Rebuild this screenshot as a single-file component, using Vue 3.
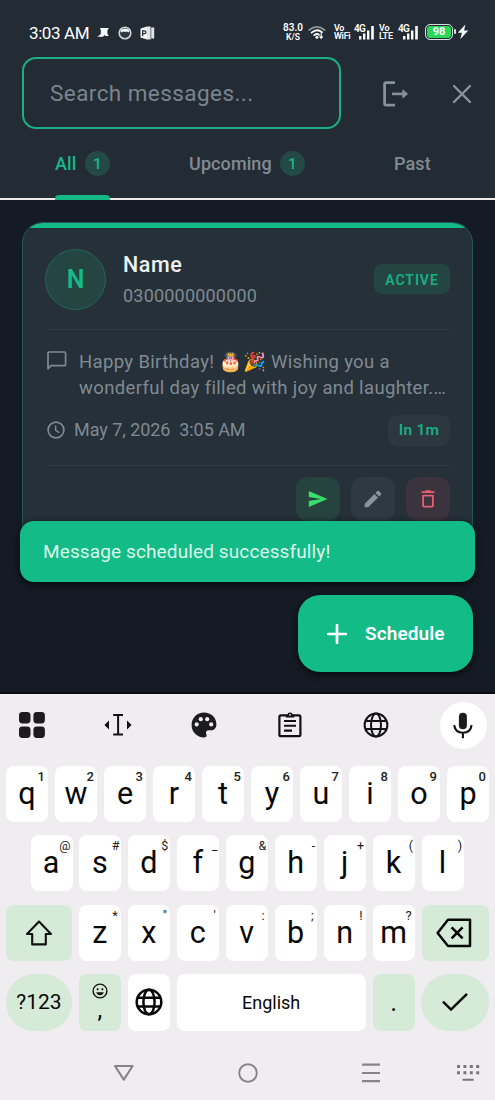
<script setup>
const rowOne = [['q', '1'], ['w', '2'], ['e', '3'], ['r', '4'], ['t', '5'], ['y', '6'], ['u', '7'], ['i', '8'], ['o', '9'], ['p', '0']]
const rowTwo = [['a', '@'], ['s', '#'], ['d', '$'], ['f', '_'], ['g', '&'], ['h', '-'], ['j', '+'], ['k', '('], ['l', ')']]
const rowThree = [['z', '*'], ['x', '"'], ['c', "'"], ['v', ':'], ['b', ';'], ['n', '!'], ['m', '?']]
</script>

<template>
  <div class="phone">
    <header class="header">
      <div class="status">
        <span class="clock">3:03 AM</span>
        <svg class="s-bird" width="13" height="12" viewBox="0 0 13 12"><path d="M3 1H11.8L10.4 3.4V6.4L11.8 9H8.4L7.6 8L6 9.8H.4L3.8 7V3Z" fill="#f4f6f8" /></svg>
        <svg class="s-face" width="14" height="14" viewBox="0 0 14 14"><circle cx="7" cy="7" r="5.8" fill="#2f3942" stroke="#cfd4d8" stroke-width="1.6" /><path d="M2.2 4.6Q7 .6 11.8 4.6L10.5 6.4L9 5.4L7 6L5 5.4L3.4 6.4Z" fill="#f4f6f8" /></svg>
        <svg class="s-office" width="15" height="14" viewBox="0 0 15 14"><path d="M.5 2.4L7 .6V13.4L.5 11.6Z" fill="#f4f6f8" /><path d="M7 .6H10.6V13.4H7ZM11.2 1.6H14.2V12.4H11.2Z" fill="#e3e6e9" /><path d="M2.6 10V4.8H4.6Q6 5 6 6.2T4.6 7.7H2.8" fill="none" stroke="#232c35" stroke-width="1.2" /></svg>
        <span class="stack speed"><b>83.0</b><i>K/S</i></span>
        <svg class="s-wifi" width="18" height="15" viewBox="0 0 18 15"><g fill="none" stroke-linecap="round"><path d="M1.2 5Q9-1.4 16.6 5" stroke="#8d959b" stroke-width="1.7" /><path d="M3.6 7.6Q9 3.2 14 7.2M6.2 10.1Q9 8 11 9.8" stroke="#fff" stroke-width="1.8" /></g><circle cx="8.9" cy="12.3" r="1.5" fill="#fff" /><path d="M13.2 8.2V13M11.6 11.4L13.2 13.2L14.6 11.4" fill="none" stroke="#fff" stroke-width="1.2" /></svg>
        <span class="stack wifi"><b>Vo</b><b>WiFi</b></span>
        <span class="signal"><b>4G</b><svg width="21" height="16" viewBox="0 0 21 16"><path d="M5 12h2.4v3.5H5ZM9 9.5h2.4v6H9ZM13 6.5h2.4v9H13ZM17.2 2h2.6v13.5h-2.6Z" fill="#fff" /></svg></span>
        <span class="stack lte"><b>Vo</b><b>LTE</b></span>
        <span class="signal second"><b>4G</b><svg width="21" height="16" viewBox="0 0 21 16"><path d="M5 12h2.4v3.5H5ZM9 9.5h2.4v6H9ZM13 6.5h2.4v9H13ZM17.2 2h2.6v13.5h-2.6Z" fill="#fff" /></svg></span>
        <span class="battery">98</span>
        <svg class="s-bolt" width="12" height="16" viewBox="0 0 12 16"><path d="M8.4.6L.8 8.8H5L3.2 15.2L11.2 6.4H7Z" fill="#fff" /></svg>
      </div>

      <div class="searchRow">
        <div class="search">Search messages...</div>
        <svg class="logout" width="26" height="26" viewBox="0 0 26 26"><path d="M12 1.6H3.2Q1.6 1.6 1.6 3.2V22.6Q1.6 24.2 3.2 24.2H12" fill="none" stroke="#87919a" stroke-width="2.8" /><path d="M9 12.9H21" stroke="#87919a" stroke-width="2.6" /><path d="M19.8 8.8L24.6 12.9L19.8 17Z" fill="#87919a" stroke="#87919a" stroke-width=".8" stroke-linejoin="round" /></svg>
        <svg class="close" width="20" height="20" viewBox="0 0 20 20"><path d="M2 2L18 18M18 2L2 18" stroke="#8b959e" stroke-width="2.3" stroke-linecap="round" /></svg>
      </div>

      <nav class="tabs">
        <div class="tab all"><span>All</span><em>1</em></div>
        <div class="tab upcoming"><span>Upcoming</span><em>1</em></div>
        <div class="tab past"><span>Past</span></div>
      </nav>
    </header>

    <main class="content">
      <article class="card">
        <div class="accent"></div>
        <div class="person">
          <div class="avatar">N</div>
          <div class="who"><strong>Name</strong><span>0300000000000</span></div>
          <div class="badge">ACTIVE</div>
        </div>
        <div class="message">
          <svg width="20" height="20" viewBox="0 0 20 20"><path d="M1 17.6V2.2Q1 1 2.2 1H17.4Q18.6 1 18.6 2.2V13.4Q18.6 14.6 17.4 14.6H4Z" fill="none" stroke="#7f8a92" stroke-width="1.7" stroke-linejoin="round" /></svg>
          <p>Happy Birthday! <span class="emoji">🎂🎉</span> Wishing you a<br>wonderful day filled with joy and laughter.…</p>
        </div>
        <div class="when">
          <svg width="18" height="18" viewBox="0 0 18 18"><circle cx="9" cy="9" r="7.9" fill="none" stroke="#7f8a92" stroke-width="1.7" /><path d="M8.6 4.6V9.3L12.4 11.6" fill="none" stroke="#7f8a92" stroke-width="1.5" /></svg>
          <span class="date">May 7, 2026&nbsp; 3:05 AM</span>
          <span class="pill">In 1m</span>
        </div>
        <div class="actions">
          <button class="send"><svg width="20" height="18" viewBox="0 0 20 18"><path d="M.8 1L19.4 9L.8 17V11L13 9L.8 7Z" fill="#37e06b" /></svg></button>
          <button class="edit"><svg width="18" height="18" viewBox="0 0 18 18"><path d="M.7 13.7V17.3H4.3L14 7.6L10.4 4ZM17 4.7Q17.5 4 17 3.3L14.7 1Q14 .5 13.3 1L11.5 2.9L15.1 6.5Z" fill="#8b949e" /></svg></button>
          <button class="trash"><svg width="14" height="18" viewBox="0 0 14 18"><path d="M.5 2.2H13.5M4.2 1.2H9.8" stroke="#e85d6f" stroke-width="1.8" /><path d="M2.1 5.6H11.9V15.4Q11.9 16.6 10.7 16.6H3.3Q2.1 16.6 2.1 15.4Z" fill="none" stroke="#e85d6f" stroke-width="1.8" /></svg></button>
        </div>
      </article>
      <div class="snack">Message scheduled successfully!</div>
      <button class="fab"><svg width="20" height="20" viewBox="0 0 20 20"><path d="M10 1.2V18.8M1.2 10H18.8" stroke="#fff" stroke-width="2.7" stroke-linecap="round" /></svg><span>Schedule</span></button>
    </main>

    <section class="keyboard">
      <div class="tools">
        <div class="tool"><svg width="26" height="26" viewBox="0 0 26 26" fill="#1c1b1e"><rect x="0" y="0" width="11.5" height="11.5" rx="3.4" /><rect x="14.4" y="0" width="11.5" height="11.5" rx="3.4" /><rect x="0" y="14.4" width="11.5" height="11.5" rx="3.4" /><rect x="14.4" y="14.4" width="11.5" height="11.5" rx="3.4" /></svg></div>
        <div class="tool"><svg width="28" height="24" viewBox="0 0 28 24"><path d="M9.2 2H19M9.2 21.6H19M14.1 2V21.6" stroke="#111" stroke-width="2" fill="none" /><path d="M5 7.5V16.5L.4 12ZM23 7.5V16.5L27.6 12Z" fill="#111" /></svg></div>
        <div class="tool"><svg width="26" height="26" viewBox="0 0 26 26"><path d="M13 .6C6 .6.6 6 .6 13S6 25.4 13 25.4C15 25.4 15.7 24.6 15.6 23.3C15.5 22 14.8 21.5 15 20.3C15.2 19 16.2 18.3 17.8 18.3H20C23.4 18.3 25.4 15.7 25.4 12.2C25.4 5.6 20 .6 13 .6Z" fill="#1c1b1e" /><g fill="#efedf0"><circle cx="5.7" cy="12.4" r="2.1" /><circle cx="9.8" cy="7.2" r="2.1" /><circle cx="16.2" cy="7.2" r="2.1" /><circle cx="20.2" cy="12.4" r="2.1" /></g></svg></div>
        <div class="tool"><svg width="24" height="26" viewBox="0 0 24 26"><rect x="1.4" y="3.4" width="21" height="20.8" rx="1.4" fill="none" stroke="#111" stroke-width="2.2" /><path d="M7.8 5.4V2.8H9.4Q9.6.4 12 .4T14.6 2.8H16.2V5.4Z" fill="#111" /><circle cx="12" cy="2.8" r=".9" fill="#efedf0" /><path d="M6 9H18M6 13.8H18M6 18.6H14" stroke="#111" stroke-width="2.1" /></svg></div>
        <div class="tool"><svg width="26" height="26" viewBox="0 0 26 26"><g fill="none" stroke="#111" stroke-width="2"><circle cx="13" cy="13" r="11.4" /><ellipse cx="13" cy="13" rx="5" ry="11.4" /><path d="M2.4 9H23.6M2.4 17H23.6" /></g></svg></div>
        <span class="mic"><svg width="20" height="27" viewBox="0 0 20 27"><rect x="5.9" y=".8" width="8" height="16.4" rx="4" fill="#1c1b1e" /><path d="M1.2 13.2Q2.2 20.8 9.9 20.8T18.6 13.2M9.9 20.8V26.2" fill="none" stroke="#111" stroke-width="2.1" /></svg></span>
      </div>

      <div class="keys">
        <div class="row top"><div v-for="k in rowOne" :key="k[0]" class="key"><span>{{ k[0] }}</span><sup>{{ k[1] }}</sup></div></div>
        <div class="row inset"><div v-for="k in rowTwo" :key="k[0]" class="key"><span>{{ k[0] }}</span><sup>{{ k[1] }}</sup></div></div>
        <div class="row">
          <div class="key wide green"><svg width="28" height="26" viewBox="0 0 28 26"><path d="M14 1.6L26 14H20.8V24.4H7.2V14H2Z" fill="none" stroke="#111" stroke-width="2.1" stroke-linejoin="round" /></svg></div>
          <div v-for="k in rowThree" :key="k[0]" class="key"><span>{{ k[0] }}</span><sup>{{ k[1] }}</sup></div>
          <div class="key wide end green"><svg class="erase" width="36" height="30" viewBox="0 0 36 30"><path d="M12 1.8H34V28H12L1.6 15Z" fill="none" stroke="#080808" stroke-width="2.5" stroke-linejoin="round" /><path d="M15.6 9.4L26.6 20.4M26.6 9.4L15.6 20.4" stroke="#080808" stroke-width="2.6" /></svg></div>
        </div>
        <div class="row last">
          <div class="key wide green round sym">?123</div>
          <div class="key green comma"><svg width="16" height="16" viewBox="0 0 16 16"><circle cx="8" cy="8" r="6.9" fill="none" stroke="#111" stroke-width="1.4" /><circle cx="5.6" cy="6.2" r="1" /><circle cx="10.4" cy="6.2" r="1" /><path d="M4.2 9.2H11.8Q10.8 12.2 8 12.2T4.2 9.2Z" fill="#111" /></svg><span>,</span></div>
          <div class="key"><svg width="28" height="28" viewBox="0 0 28 28"><g fill="none" stroke="#080808" stroke-width="2.5"><circle cx="14" cy="14" r="12.3" /><ellipse cx="14" cy="14" rx="5.6" ry="12.3" /><path d="M2.4 9.8H25.6M2.4 18.4H25.6" /></g></svg></div>
          <div class="key space">English</div>
          <div class="key green dot"><span>.</span></div>
          <div class="key wide end green round"><svg width="28" height="20" viewBox="0 0 28 20"><path d="M2 9.6L10 17.6L26 1.8" fill="none" stroke="#080808" stroke-width="2.5" /></svg></div>
        </div>
      </div>

      <div class="nav">
        <svg width="22" height="18" viewBox="0 0 22 18"><path d="M2 2H19.6L10.8 15.6Z" fill="none" stroke="#858487" stroke-width="2.1" stroke-linejoin="round" /></svg>
        <svg width="20" height="20" viewBox="0 0 20 20"><circle cx="10" cy="10" r="8.8" fill="none" stroke="#858487" stroke-width="1.9" /></svg>
        <svg width="20" height="20" viewBox="0 0 20 20"><path d="M1 1.6H19M1 10H19M1 18.2H19" stroke="#858487" stroke-width="2.2" /></svg>
        <svg width="24" height="18" viewBox="0 0 24 18" fill="#777679"><path d="M1 1h3v3H1zM7.4 1h3v3h-3zM13.8 1h3v3h-3zM20.2 1h3v3h-3zM1 7.2h3v3H1zM7.4 7.2h3v3h-3zM13.8 7.2h3v3h-3zM20.2 7.2h3v3h-3zM6.6 14.8h11v2h-11z" /></svg>
      </div>
    </section>
  </div>
</template>

<style>
body { margin: 0; }
</style>

<style scoped>
* { box-sizing: border-box; }
.phone { width: 495px; height: 1100px; overflow: hidden; background: #151b24; font-family: Roboto, "Noto Sans", sans-serif; display: flex; flex-direction: column; }
svg { display: block; flex: none; }
button { border: 0; padding: 0; font: inherit; }
.header { height: 200px; flex: none; background: #232c35; border-bottom: 2px solid #eee9e6; }

.status { height: 57px; display: flex; align-items: flex-start; padding: 0 0 0 29px; color: #fff; }
.clock { width: 68px; margin-top: 23px; line-height: 20px; font-size: 17px; letter-spacing: -.4px; white-space: nowrap; }
.s-bird { margin-top: 27px; }
.s-face { margin: 26px 0 0 8px; }
.s-office { margin: 26px 0 0 8px; }
.stack { display: flex; flex-direction: column; align-items: center; font-size: 9px; line-height: 8.5px; margin-top: 23.5px; white-space: nowrap; }
.stack b, .stack i { font-weight: 600; font-style: normal; }
.stack i { font-size: 8.5px; margin-top: 1px; line-height: 8px; }
.speed { margin: 23px 0 0 128px; width: 20px; }
.speed b { font-size: 10px; line-height: 9px; }
.s-wifi { margin: 25px 0 0 5px; }
.wifi, .lte { align-items: flex-start; }
.wifi { margin-left: 8px; width: 20px; letter-spacing: -.3px; }
.lte { margin-left: 4px; width: 19px; letter-spacing: -.2px; }
.signal { position: relative; width: 21px; margin-top: 24px; }
.signal b { position: absolute; left: 0; top: 0; font-size: 10px; line-height: 10px; letter-spacing: -.7px; font-weight: 600; }
.battery { position: relative; width: 28px; height: 16px; margin: 24px 0 0 6px; border: 1.5px solid #d9dcdf; border-radius: 5px; background: #2bd658; box-shadow: inset 0 0 0 1px #232c35; font-size: 11px; line-height: 13.5px; font-weight: 700; text-align: center; }
.battery::after { content: ""; position: absolute; right: -4px; top: 4px; width: 2px; height: 5px; background: #d9dcdf; border-radius: 1px; }
.s-bolt { margin: 24px 0 0 4px; }

.searchRow { height: 72px; display: flex; align-items: center; padding-left: 22px; }
.search { width: 319px; height: 72px; border: 2px solid #1bb083; border-radius: 14px; padding-left: 26px; color: #7a858e; font-size: 22.5px; line-height: 68px; letter-spacing: .43px; white-space: nowrap; }
.logout { margin: 1px 0 0 42px; }
.close { margin: 1px 0 0 43px; }

.tabs { height: 69px; display: flex; padding-left: 55px; }
.tab { position: relative; height: 70px; display: flex; align-items: flex-start; padding-top: 22px; font-size: 18px; line-height: 25px; font-weight: 500; color: #818b94; letter-spacing: .1px; white-space: nowrap; }
.tab em { font-style: normal; width: 25px; height: 25px; border-radius: 50%; background: #234a47; color: #17b886; font-size: 15.5px; line-height: 26px; text-align: center; letter-spacing: 0; margin-left: auto; }
.all { width: 55px; color: #17b886; }
.all::after { content: ""; position: absolute; left: 0; right: 0; bottom: -1px; height: 5px; background: #14b986; border-radius: 4px 4px 0 0; }
.upcoming { width: 116px; margin-left: 79px; }
.past { margin-left: 89px; }

.content { position: relative; height: 494px; flex: none; padding: 21.5px 22px 0; border-bottom: 2px solid #060b13; }
.card { position: relative; height: 345px; border: 1.5px solid #245750; border-radius: 21px; background: #253039; overflow: hidden; padding: 0 22px; }
.accent { height: 5px; margin: 0 -22px; background: #13bb86; }
.person { height: 102px; padding-top: 21px; display: flex; align-items: flex-start; border-bottom: 1px solid #2d3841; }
.avatar { width: 61px; height: 61px; border-radius: 50%; border: 1.5px solid #21685a; background: #244542; color: #13bb86; font-size: 25px; font-weight: 600; text-align: center; line-height: 59px; }
.who { margin-left: 17px; display: flex; flex-direction: column; }
.who strong { font-size: 21.5px; line-height: 30px; font-weight: 500; color: #eef0f5; letter-spacing: .6px; margin-top: 1px; }
.who span { font-size: 18px; line-height: 26px; color: #7f8a92; letter-spacing: .2px; margin-top: 3px; }
.badge { width: 76px; height: 30px; margin: 15px 0 0 auto; border-radius: 8px; background: #244542; color: #17b083; font-size: 14px; font-weight: 600; letter-spacing: .95px; text-align: center; line-height: 32px; }
.message { display: flex; padding: 21px 0 0 2px; height: 85px; }
.message p { margin: -1.5px 0 0 12px; font-size: 18.5px; line-height: 26px; color: #808a92; white-space: nowrap; letter-spacing: .35px; }
.when { display: flex; align-items: center; height: 31px; padding-left: 2px; color: #7f8a92; }
.date { margin: -2px 0 0 9px; font-size: 18px; letter-spacing: -.05px; }
.pill { margin-left: auto; width: 62px; height: 31px; border-radius: 9px; background: #2c3740; color: #17b083; font-size: 15.5px; font-weight: 600; line-height: 31px; text-align: center; letter-spacing: .2px; }
.actions { margin-top: 19px; border-top: 1px solid #2d3841; display: flex; justify-content: flex-end; gap: 11px; padding-top: 11px; }
.actions button { width: 44px; height: 44px; border-radius: 12px; display: flex; align-items: center; justify-content: center; }
.send { background: #27433f; }
.edit { background: #2e3942; }
.trash { background: #3b343f; }

.snack { position: absolute; left: 20px; top: 321px; width: 454.5px; height: 61px; border-radius: 14px; background: #13bb86; color: #dcf7ed; font-size: 19px; line-height: 62px; padding-left: 23px; box-shadow: 0 2px 7px #05080d; white-space: nowrap; letter-spacing: .12px; }
.fab { position: absolute; left: 298px; top: 395px; width: 175px; height: 77px; border-radius: 22px; background: #13bb86; color: #fff; display: flex; align-items: center; padding-left: 29px; box-shadow: 0 2px 6px #05080d; font-size: 19px; font-weight: 600; letter-spacing: .1px; }
.fab span { margin-left: 18px; }

.keyboard { flex: 1; background: #efedf0; color: #080808; }
.tools { height: 62px; display: flex; align-items: center; }
.tool { width: 86px; display: flex; justify-content: center; }
.tool:first-child { width: 75px; padding-right: 12px; }
.mic { width: 47px; height: 47px; margin-left: 20.5px; border-radius: 50%; background: #fff; display: flex; align-items: center; justify-content: center; }
.keys { padding: 10px 6px 0; display: flex; flex-direction: column; gap: 13.3px; }
.row { display: flex; height: 56px; justify-content: space-between; }
.inset { padding: 0 25px 0 24.5px; }
.last { height: 57px; }
.key { position: relative; width: 42px; border-radius: 8px; background: #fff; display: flex; align-items: center; justify-content: center; }
.key > span { font-size: 30.5px; line-height: 56px; }
.key sup { position: absolute; top: 3px; right: 3px; font-size: 13px; line-height: 15px; color: #222; }
.inset .key > span { padding-right: 1px; }
.inset .key sup { right: 2px; font-size: 12.5px; }
.top sup { font-weight: 500; }
.wide { width: 66px; }
.end { width: 67.5px; }
.green { background: #d6ebd7; }
.round { border-radius: 29px; }
.erase { margin-right: 2px; }
.sym { font-size: 21px; }
.comma { flex-direction: column; justify-content: flex-start; padding-top: 9px; }
.comma > span { font-size: 24px; line-height: 24px; margin-top: -1px; }
.dot > span { font-size: 26px; line-height: 66px; }
.space { width: 189px; font-size: 18px; }
.nav { height: 69px; display: flex; align-items: center; margin-top: 8px; padding: 0 15px 0 113px; justify-content: space-between; }
.nav svg:nth-child(4) { margin-left: -28px; }
</style>
